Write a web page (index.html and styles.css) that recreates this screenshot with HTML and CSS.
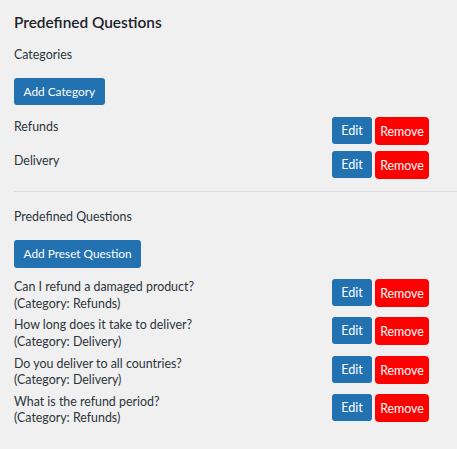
FILE: index.html
```html
<!DOCTYPE html>
<html>
<head>
<meta charset="utf-8">
<link rel="stylesheet" href="styles.css">
</head>
<body>
<div class="wrap">
  <h2 class="title">Predefined Questions</h2>
  <h3 class="label label-first">Categories</h3>
  <button class="btn btn-add">Add Category</button>
  <div class="list list-cats">
    <div class="row">
      <div class="text">Refunds</div>
      <div class="actions"><button class="btn btn-edit">Edit</button><button class="btn btn-remove">Remove</button></div>
    </div>
    <div class="row">
      <div class="text">Delivery</div>
      <div class="actions"><button class="btn btn-edit">Edit</button><button class="btn btn-remove">Remove</button></div>
    </div>
  </div>
  <hr class="divider">
  <h3 class="label">Predefined Questions</h3>
  <button class="btn btn-add btn-add-q">Add Preset Question</button>
  <div class="list list-qs">
    <div class="row">
      <div class="text">Can I refund a damaged product?<br>(Category: Refunds)</div>
      <div class="actions"><button class="btn btn-edit">Edit</button><button class="btn btn-remove">Remove</button></div>
    </div>
    <div class="row">
      <div class="text">How long does it take to deliver?<br>(Category: Delivery)</div>
      <div class="actions"><button class="btn btn-edit">Edit</button><button class="btn btn-remove">Remove</button></div>
    </div>
    <div class="row">
      <div class="text">Do you deliver to all countries?<br>(Category: Delivery)</div>
      <div class="actions"><button class="btn btn-edit">Edit</button><button class="btn btn-remove">Remove</button></div>
    </div>
    <div class="row">
      <div class="text">What is the refund period?<br>(Category: Refunds)</div>
      <div class="actions"><button class="btn btn-edit">Edit</button><button class="btn btn-remove">Remove</button></div>
    </div>
  </div>
</div>
</body>
</html>
```

FILE: styles.css
```css
* { box-sizing: border-box; }
html, body {
  margin: 0;
  padding: 0;
  background: #f0f0f1;
}
body {
  font-family: "Lato", "Open Sans", sans-serif;
  color: #1d2327;
  font-size: 12.4px;
  overflow: hidden;
}
.wrap {
  padding: 11px 28px 0 14px;
}
.title {
  margin: 0;
  font-size: 15.4px;
  font-weight: 600;
  line-height: 22px;
}
.label {
  margin: 0;
  font-size: 12.4px;
  font-weight: 400;
  line-height: 17px;
  color: #2c3338;
}
.label-first {
  margin-top: 13px;
}
.btn {
  font-family: inherit;
  border: none;
  color: #fff;
  cursor: pointer;
  padding: 0;
  margin: 0;
}
.btn-add {
  display: block;
  margin-top: 15px;
  height: 27px;
  padding: 0 9.5px;
  background: #2271b1;
  border-radius: 3px;
  font-size: 11.85px;
  line-height: 27px;
}
.btn-add-q {
  height: 28px;
  line-height: 28px;
}
.list-cats { margin-top: 12px; }
.list-qs { margin-top: 11px; }
.row {
  display: flex;
  justify-content: space-between;
  align-items: flex-start;
}
.list-cats .row { margin-bottom: 6px; }
.list-cats .text { line-height: 17px; padding-top: 0.5px; }
.list-qs .row { margin-bottom: 5.33px; }
.text {
  font-size: 12.4px;
  line-height: 16.5px;
  color: #2c3338;
}
.actions {
  display: flex;
  gap: 3px;
  align-items: flex-start;
}
.btn-edit {
  width: 40px;
  height: 27px;
  background: #2271b1;
  border-radius: 3px;
  font-size: 12.6px;
  line-height: 27px;
}
.btn-remove {
  width: 54px;
  height: 28px;
  background: #ff0000;
  border-radius: 4px;
  font-size: 12.4px;
  line-height: 30px;
}
.divider {
  border: none;
  border-top: 1px solid #dcdcde;
  margin: 12px -28px 16px 0;
  height: 0;
}
```
